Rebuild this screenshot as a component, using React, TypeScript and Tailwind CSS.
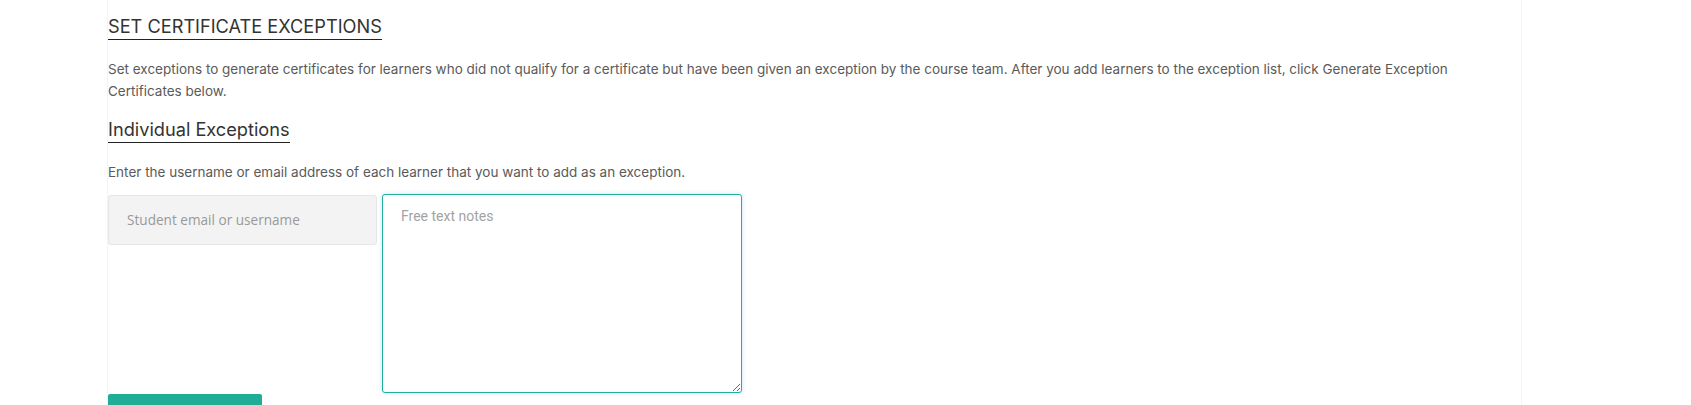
import React from "react";

export default function App() {
  return (
    <div className="w-full h-[405px] bg-white overflow-hidden" style={{ fontFamily: "Inter, 'Noto Sans', sans-serif" }}>
      <div className="ml-[107px] w-[1415px] h-full border-l border-r border-[#f4f4f4]">
        <div className="pt-[15px]">
          <h2 className="inline-block text-[18.2px] leading-[22px] text-[#333] font-normal pb-[2px] border-b border-[#222]">
            SET CERTIFICATE EXCEPTIONS
          </h2>
        </div>
        <p className="mt-[19px] text-[13.5px] leading-[21.6px] text-[#5a5a5a] pr-[10px]">
          Set exceptions to generate certificates for learners who did not qualify for a certificate but have been given an exception by the course team. After you add learners to the exception list, click Generate Exception Certificates below.
        </p>
        <div className="mt-[16px]">
          <h3 className="inline-block text-[18.2px] leading-[22px] text-[#333] font-normal pb-[2px] border-b border-[#222]">
            Individual Exceptions
          </h3>
        </div>
        <p className="mt-[19px] text-[13.5px] leading-[21.6px] text-[#5a5a5a]">
          Enter the username or email address of each learner that you want to add as an exception.
        </p>
        <div className="mt-[10px] flex items-start gap-[5px]">
          <input
            type="text"
            placeholder="Student email or username"
            className="mt-[1px] w-[269px] h-[50px] rounded-[3px] border border-[#e6e6e6] bg-[#f3f3f3] px-[18px] text-[13.6px] text-[#333] placeholder:text-[#999] outline-none"
            style={{ fontFamily: "'Open Sans', sans-serif" }}
          />
          <textarea
            placeholder="Free text notes"
            className="w-[360px] h-[199px] rounded-[3px] border border-[#1fb09a] bg-white px-[18px] pt-[11px] pb-[8px] text-[14px] leading-[20px] text-[#333] placeholder:text-[#a3a3a3] outline-none shadow-[0_0_4px_rgba(80,160,230,0.35)]"
            style={{ fontFamily: "Roboto, sans-serif" }}
          />
        </div>
        <button className="mt-[1px] w-[154px] h-[40px] bg-[#20ad95] rounded-[2px] text-white text-[14px]"></button>
      </div>
    </div>
  );
}
